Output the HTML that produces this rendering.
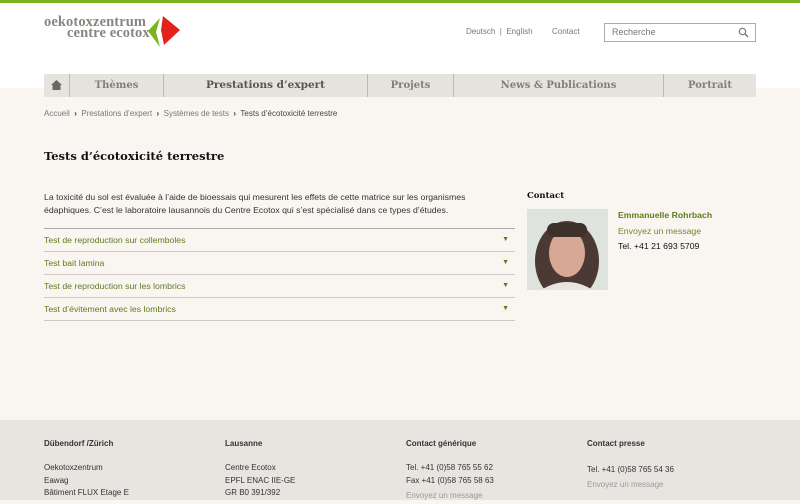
<!DOCTYPE html>
<html><head><meta charset="utf-8"><style>
*{margin:0;padding:0;box-sizing:border-box}
body{width:800px;height:500px;overflow:hidden;background:#f9f6f2;font-family:"Liberation Sans",sans-serif;position:relative}
.top{position:absolute;left:0;top:0;width:800px;height:88px;background:#fff;border-top:3px solid #7ab51d}
.abs{position:absolute;white-space:nowrap}
.serif{font-family:"DejaVu Serif","Liberation Serif",serif}
.nav{position:absolute;left:44px;top:74px;width:712px;height:23px;background:#e6e2de}
.nav div{position:absolute;top:0;height:23px;line-height:23px;text-align:center;font-family:"DejaVu Serif",serif;font-weight:bold;font-size:10px;color:#857e78}
.sep{position:absolute;top:4px;width:1px;height:15px;background:#bfb9b3}
.acc{position:absolute;left:44px;width:471px;height:23px;border-top:1px solid #cfcac5;font-size:8.7px;color:#5f7a1d;line-height:22px}
.acc span{position:absolute;right:6px;font-size:7px}
.foot{position:absolute;left:0;top:420px;width:800px;height:80px;background:#e8e5e1;font-size:8px;color:#333}
.foot .h{font-weight:bold;position:absolute;top:19px}
</style></head><body>
<div class="top"></div>
<div class="abs" style="left:44px;top:17px;font-family:'Liberation Serif',serif;font-size:14.5px;font-weight:bold;color:#8a8580;line-height:11px;letter-spacing:0.1px">oekotoxzentrum<br><span style="padding-left:23px">centre ecotox</span></div>
<svg class="abs" style="left:146px;top:16px" width="36" height="32"><polygon points="14,2 2,15 14,31 10,16" fill="#7ab51d"/><polygon points="17,0 34,14 18,29 15,14" fill="#e2231a"/></svg>
<div class="abs" style="left:466px;top:27px;font-size:8px;color:#777">Deutsch &nbsp;|&nbsp; English</div>
<div class="abs" style="left:552px;top:27px;font-size:8px;color:#777">Contact</div>
<div class="abs" style="left:604px;top:23px;width:152px;height:19px;border:1px solid #aaa;background:#fff;font-size:9px;color:#777;padding:3px 7px">Recherche</div>
<svg class="abs" style="left:738px;top:27px" width="11" height="11"><circle cx="4.5" cy="4.5" r="3.2" fill="none" stroke="#777" stroke-width="1.2"/><line x1="7" y1="7" x2="10" y2="10" stroke="#777" stroke-width="1.4"/></svg>
<div class="nav">
<svg style="position:absolute;left:7px;top:6px" width="11" height="10"><polygon points="5.5,0 11,5 9.5,5 9.5,10 1.5,10 1.5,5 0,5" fill="#6d6660"/></svg>
<div class="sep" style="left:25px"></div>
<div style="left:26px;width:93px">Thèmes</div>
<div class="sep" style="left:119px"></div>
<div style="left:120px;width:203px;color:#5a5550;font-size:10.5px">Prestations d’expert</div>
<div class="sep" style="left:323px"></div>
<div style="left:324px;width:85px">Projets</div>
<div class="sep" style="left:409px"></div>
<div style="left:410px;width:209px">News &amp; Publications</div>
<div class="sep" style="left:619px"></div>
<div style="left:620px;width:92px">Portrait</div>
</div>
<div class="abs" style="left:44px;top:109px;font-size:8px;color:#777">Accueil &nbsp;<b style="color:#333">›</b>&nbsp; Prestations d’expert &nbsp;<b style="color:#333">›</b>&nbsp; Systèmes de tests &nbsp;<b style="color:#333">›</b>&nbsp; <span style="color:#444">Tests d’écotoxicité terrestre</span></div>
<div class="abs serif" style="left:44px;top:149px;font-size:11.5px;font-weight:bold;color:#111">Tests d’écotoxicité terrestre</div>
<div class="abs" style="left:44px;top:191px;font-size:8.7px;color:#333;line-height:13px">La toxicité du sol est évaluée à l’aide de bioessais qui mesurent les effets de cette matrice sur les organismes<br>édaphiques. C’est le laboratoire lausannois du Centre Ecotox qui s’est spécialisé dans ce types d’études.</div>
<div class="acc" style="top:228px;border-top-color:#aaa">Test de reproduction sur collemboles<span>▼</span></div>
<div class="acc" style="top:251px">Test bait lamina<span>▼</span></div>
<div class="acc" style="top:274px">Test de reproduction sur les lombrics<span>▼</span></div>
<div class="acc" style="top:297px">Test d’évitement avec les lombrics<span>▼</span></div>
<div class="abs" style="left:44px;top:320px;width:471px;border-top:1px solid #cfcac5"></div>
<div class="abs serif" style="left:527px;top:191px;font-size:8.5px;font-weight:bold;color:#111">Contact</div>
<svg class="abs" style="left:527px;top:209px" width="81" height="81"><rect width="81" height="81" fill="#dfe3de"/><ellipse cx="40" cy="52" rx="32" ry="40" fill="#4a3a33"/><ellipse cx="40" cy="44" rx="18" ry="24" fill="#d7a894"/><rect x="20" y="14" width="40" height="14" rx="7" fill="#3e302b"/><path d="M14 81 Q40 65 66 81Z" fill="#e8e4e0"/></svg>
<div class="abs" style="left:618px;top:210px;font-size:8.7px;font-weight:bold;color:#5f7a1d">Emmanuelle Rohrbach</div>
<div class="abs" style="left:618px;top:226px;font-size:8.7px;color:#6a8a2a">Envoyez un message</div>
<div class="abs" style="left:618px;top:241px;font-size:8.7px;color:#111">Tel. +41 21 693 5709</div>
<div class="foot">
<div class="h" style="left:44px">Dübendorf /Zürich</div>
<div class="h" style="left:225px">Lausanne</div>
<div class="h" style="left:406px">Contact générique</div>
<div class="h" style="left:587px">Contact presse</div>
<div class="abs" style="left:44px;top:42px;line-height:12.5px">Oekotoxzentrum<br>Eawag<br>Bâtiment FLUX Etage E</div>
<div class="abs" style="left:225px;top:42px;line-height:12.5px">Centre Ecotox<br>EPFL ENAC IIE-GE<br>GR B0 391/392</div>
<div class="abs" style="left:406px;top:42px;line-height:12.5px">Tel. +41 (0)58 765 55 62<br>Fax +41 (0)58 765 58 63<br><span style="color:#999;line-height:17px">Envoyez un message</span></div>
<div class="abs" style="left:587px;top:42px;line-height:15px">Tel. +41 (0)58 765 54 36<br><span style="color:#999">Envoyez un message</span></div>
</div>
</body></html>
